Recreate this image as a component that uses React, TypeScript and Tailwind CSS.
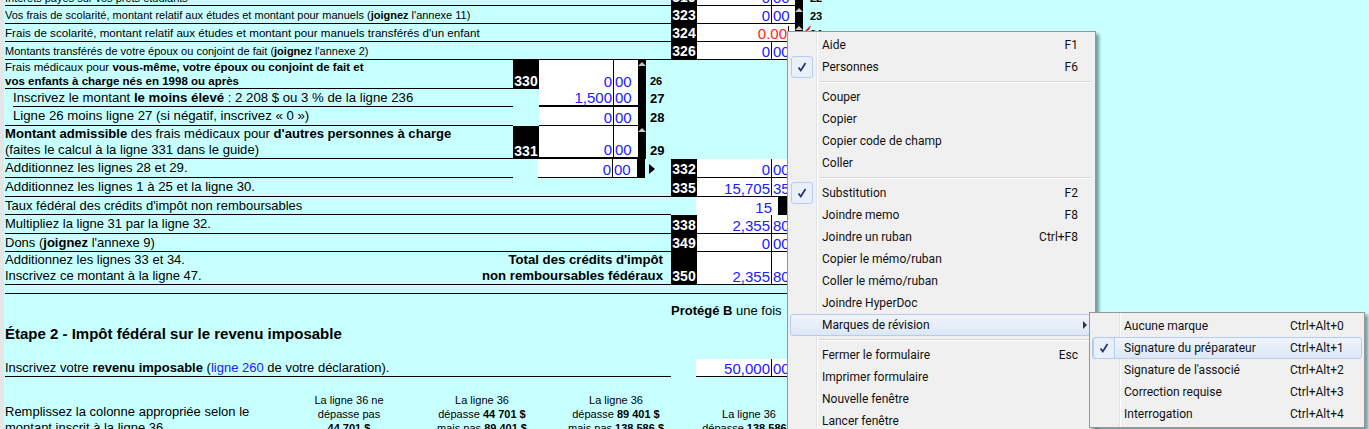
import type { ReactNode } from "react";

const num = "text-[#2020ff] text-[15px] leading-none";

function Code({ children }: { children?: ReactNode }) {
  return (
    <div className="flex w-[26px] shrink-0 items-end justify-center bg-black text-[14px] leading-[16px] font-bold text-white">
      {children}
    </div>
  );
}

function Amount({ amount, cents }: { amount: string; cents: string }) {
  return (
    <div className={`flex w-[98px] shrink-0 items-end bg-white ${num}`}>
      <div className="flex h-full w-[75px] items-end justify-end border-r border-black pr-[1px]">{amount}</div>
      <div className="pl-[1px]">{cents}</div>
    </div>
  );
}

function Bar({ tri = false }: { tri?: boolean }) {
  return (
    <div className="flex w-[8px] shrink-0 justify-center bg-black pt-[2px]">
      {tri && <div className="h-0 w-0 border-x-[4px] border-b-[4px] border-x-transparent border-b-[#c8c8c8]" />}
    </div>
  );
}

function Row({
  className,
  children,
  code,
  amount,
  cents,
  no,
  tri,
}: {
  className: string;
  children: ReactNode;
  code: string;
  amount: string;
  cents: string;
  no?: string;
  tri?: boolean;
}) {
  return (
    <div className={`flex ${className}`}>
      <div className="flex w-[790px] shrink-0 border-b border-black">
        <div className="flex-1 overflow-hidden">{children}</div>
        <Code>{code}</Code>
        <Amount amount={amount} cents={cents} />
      </div>
      <Bar tri={tri} />
      {no && <div className="ml-[7px] self-end text-[11px] leading-[16px] font-bold">{no}</div>}
    </div>
  );
}

function SubRow({
  className,
  label,
  code,
  amount,
  cents,
  no,
  tri,
  noCls = "text-[13px]",
  lineCls = "",
  fieldCls = "border-b border-black",
}: {
  className: string;
  label: ReactNode;
  code?: string;
  amount: string;
  cents: string;
  no: string;
  tri?: boolean;
  noCls?: string;
  lineCls?: string;
  fieldCls?: string;
}) {
  return (
    <div className={`flex ${className}`}>
      <div className={`w-[508px] shrink-0 ${lineCls}`}>
        <div className="h-full border-b border-black">{label}</div>
      </div>
      {code ? <Code>{code}</Code> : <div className="w-[26px] shrink-0" />}
      <div className={`flex w-[99px] shrink-0 items-end bg-white ${num} ${fieldCls}`}>
        <div className="flex h-full w-[75px] items-end justify-end border-r border-black pr-[1px]">{amount}</div>
        <div className="pl-[1px]">{cents}</div>
      </div>
      <Bar tri={tri} />
      <div className={`ml-[4px] self-end leading-[16px] font-bold ${noCls}`}>{no}</div>
    </div>
  );
}

function Check() {
  return (
    <div className="flex h-[22px] w-[22px] items-center justify-center rounded-[3px] border border-[#b4cdee] bg-[#e9effb]">
      <svg viewBox="0 0 10 10" className="h-[10px] w-[10px]">
        <path d="M1.5 5.5 L3.8 8.5 L8.5 1" fill="none" stroke="#20307a" strokeWidth="1.7" />
      </svg>
    </div>
  );
}

function Item({ label, keys, checked, hot, arrow }: { label: string; keys?: string; checked?: boolean; hot?: boolean; arrow?: boolean }) {
  return (
    <div className={`flex h-[22px] items-center rounded-[3px] border ${hot ? "border-[#b4cdee] bg-linear-to-b from-[#f0f4fb] to-[#dce7f6]" : "border-transparent"}`}>
      <div className="flex w-[31px] shrink-0 items-center">{checked && <Check />}</div>
      <div className="flex-1">{label}</div>
      {keys && <div className="pr-[14px]">{keys}</div>}
      {arrow && <div className="mr-[5px] h-0 w-0 border-y-[4px] border-l-[4px] border-y-transparent border-l-[#333]" />}
    </div>
  );
}

function Sep() {
  return <div className="my-[3px] ml-[30px] mr-[2px] h-[2px] border-t border-[#d7d7d7] bg-white" />;
}

function SubItem({ label, keys, hot, checked }: { label: string; keys: string; hot?: boolean; checked?: boolean }) {
  return (
    <div className={`flex h-[22px] items-center rounded-[3px] border ${hot ? "border-[#b4cdee] bg-linear-to-b from-[#f0f4fb] to-[#dce7f6]" : "border-transparent"}`}>
      <div className="flex w-[31px] shrink-0 items-center">{checked && <Check />}</div>
      <div className="w-[166px] shrink-0">{label}</div>
      <div>{keys}</div>
    </div>
  );
}

export default function App() {
  return (
    <div className="relative h-[429px] w-[1369px] overflow-hidden border-l-[4px] border-[#e6e6e6] bg-[#c8ffff] pl-[1px] font-['Liberation_Sans',sans-serif] text-black">
      {/* formulaire */}
      <Row className="h-[6px]" code="319" amount="0" cents="00" no="22">
        <div className="-mt-[9px] text-[11px] leading-[14px]">Intérêts payés sur vos prêts étudiants</div>
      </Row>
      <Row className="h-[18px]" code="323" amount="0" cents="00" no="23" tri>
        <div className="text-[11px] leading-[18px]">
          Vos frais de scolarité, montant relatif aux études et montant pour manuels (<b>joignez</b> l'annexe 11)
        </div>
      </Row>
      <div className="flex h-[18px]">
        <div className="flex w-[790px] shrink-0 border-b border-black">
          <div className="flex-1 text-[11.6px] leading-[18px]">Frais de scolarité, montant relatif aux études et montant pour manuels transférés d'un enfant</div>
          <Code>324</Code>
          <div className="relative flex w-[98px] shrink-0 items-end justify-end bg-white pr-[8px] text-[15px] leading-none text-[#ff2020]">
            0.00
            <div className="absolute right-[6px] bottom-[1px] h-[14px] w-[1px] bg-black" />
          </div>
        </div>
        <Bar tri />
        <div className="ml-[7px] self-end text-[11px] leading-[16px] font-bold">24</div>
      </div>
      <Row className="h-[18px]" code="326" amount="0" cents="00">
        <div className="text-[11px] leading-[18px]">
          Montants transférés de votre époux ou conjoint de fait (<b>joignez</b> l'annexe 2)
        </div>
      </Row>

      <SubRow
        className="h-[29px]"
        code="330"
        amount="0"
        cents="00"
        no="26"
        tri
        noCls="text-[11px]"
        fieldCls=""
        label={
          <div className="text-[11.5px] leading-[14px]">
            Frais médicaux pour <b>vous-même, votre époux ou conjoint de fait et</b>
            <br />
            <b>vos enfants à charge nés en 1998 ou après</b>
          </div>
        }
      />
      <SubRow
        className="h-[18px]"
        amount="1,500"
        cents="00"
        no="27"
        fieldCls="border-b-2 border-black"
        lineCls="pl-[8px]"
        label={
          <div className="text-[13.2px] leading-[18px]">
            Inscrivez le montant <b>le moins élevé</b> : 2 208 $ ou 3 % de la ligne 236
          </div>
        }
      />
      <SubRow
        className="h-[19px]"
        amount="0"
        cents="00"
        no="28"
        label={
          <div className="pl-[8px] text-[13.2px] leading-[18px]">Ligne 26 moins ligne 27 (si négatif, inscrivez « 0 »)</div>
        }
      />
      <SubRow
        className="h-[33px]"
        code="331"
        amount="0"
        cents="00"
        no="29"
        tri
        fieldCls="border-b-2 border-black"
        label={
          <div className="text-[13.1px] leading-[16px]">
            <b>Montant admissible</b> des frais médicaux pour <b>d'autres personnes à charge</b>
            <br />
            (faites le calcul à la ligne 331 dans le guide)
          </div>
        }
      />
      <div className="flex h-[19px]">
        <div className="w-[508px] shrink-0 border-b border-black text-[13.2px] leading-[18px]">Additionnez les lignes 28 et 29.</div>
        <div className="w-[25px] shrink-0" />
        <div className={`flex w-[99px] shrink-0 items-end border-b border-black bg-white ${num}`}>
          <div className="flex h-full w-[75px] items-end justify-end border-r border-black pr-[1px]">0</div>
          <div className="pl-[1px]">00</div>
        </div>
        <Bar />
        <div className="ml-[4px] h-0 w-0 self-center border-y-[5px] border-l-[6px] border-y-transparent border-l-black" />
        <div className="w-[16px] shrink-0" />
        <div className="flex w-[124px] shrink-0 border-b border-black">
          <Code>332</Code>
          <Amount amount="0" cents="00" />
        </div>
      </div>
      <Row className="h-[19px]" code="335" amount="15,705" cents="35">
        <div className="text-[13.2px] leading-[18px]">Additionnez les lignes 1 à 25 et la ligne 30.</div>
      </Row>
      <div className="flex h-[18px]">
        <div className="w-[666px] shrink-0 border-b border-black text-[13px] leading-[17px]">Taux fédéral des crédits d'impôt non remboursables</div>
        <div className="w-[25px] shrink-0" />
        <div className={`flex w-[82px] shrink-0 items-end justify-end bg-white pr-[6px] ${num}`}>15</div>
        <div className="w-[18px] shrink-0 bg-black" />
      </div>
      <Row className="h-[19px]" code="338" amount="2,355" cents="80">
        <div className="text-[13px] leading-[18px]">Multipliez la ligne 31 par la ligne 32.</div>
      </Row>
      <Row className="h-[18px]" code="349" amount="0" cents="00">
        <div className="text-[13px] leading-[17px]">
          Dons (<b>joignez</b> l'annexe 9)
        </div>
      </Row>
      <Row className="h-[33px]" code="350" amount="2,355" cents="80">
        <div className="flex text-[13px] leading-[16px]">
          <div>
            Additionnez les lignes 33 et 34.
            <br />
            Inscrivez ce montant à la ligne 47.
          </div>
          <div className="ml-auto pr-[8px] text-right text-[13.2px] font-bold">
            Total des crédits d'impôt
            <br />
            non remboursables fédéraux
          </div>
        </div>
      </Row>
      <div className="mt-[8px] w-[790px] border-b border-black" />

      <div className="mt-[9px] flex w-[790px] justify-end text-[13px] leading-[16px] whitespace-nowrap">
        <div className="w-[124px] shrink-0">
          <b>Protégé B</b> une fois
        </div>
      </div>
      <div className="mt-[6px] text-[15px] leading-[18px] font-bold">Étape 2 - Impôt fédéral sur le revenu imposable</div>

      <div className="mt-[16px] flex h-[18px] w-[790px]">
        <div className="w-[666px] shrink-0 border-b border-black text-[13px] leading-[18px]">
          Inscrivez votre <b>revenu imposable</b> (<span className="text-[#2020ff]">ligne 260</span> de votre déclaration).
        </div>
        <div className="w-[25px] shrink-0" />
        <div className={`flex w-[99px] shrink-0 items-end border-b border-black bg-white ${num}`}>
          <div className="flex h-full w-[76px] items-end justify-end border-r border-black pr-[1px]">50,000</div>
          <div className="pl-[1px]">00</div>
        </div>
      </div>

      <div className="mt-[16px] flex text-[11px] leading-[14px]">
        <div className="mt-[11px] w-[284px] shrink-0 text-[13px] leading-[16px]">
          Remplissez la colonne appropriée selon le
          <br />
          montant inscrit à la ligne 36.
        </div>
        <div className="w-[120px] shrink-0 text-center">
          La ligne 36 ne
          <br />
          dépasse pas
          <br />
          <b>44 701 $</b>
        </div>
        <div className="ml-[13px] w-[120px] shrink-0 text-center">
          La ligne 36
          <br />
          dépasse <b>44 701 $</b>
          <br />
          mais pas <b>89 401 $</b>
        </div>
        <div className="ml-[14px] w-[120px] shrink-0 text-center">
          La ligne 36
          <br />
          dépasse <b>89 401 $</b>
          <br />
          mais pas <b>138 586 $</b>
        </div>
        <div className="ml-[13px] mt-[14px] w-[120px] shrink-0 text-center">
          La ligne 36
          <br />
          dépasse <b>138 586 $</b>
        </div>
      </div>

      {/* marqueur rouge */}
      <svg viewBox="0 0 8 8" className="absolute top-[25px] left-[801px] h-[7px] w-[7px]">
        <path d="M7 0 L3 4 L1 6 L0 8 L5 5 Z" fill="#f00000" />
      </svg>

      {/* menu contextuel */}
      <div className="absolute top-[31px] left-[783px] h-[420px] w-[309px] border border-[#979797] bg-[#f0f0f0] p-[2px] pt-[2px] font-['Roboto',sans-serif] text-[12px] text-[#111] shadow-[3px_3px_3px_rgba(60,90,90,0.6)]">
        <div className="absolute top-0 bottom-0 left-[28px] w-[2px] border-l border-[#e2e3e3] bg-white" />
        <div className="relative">
          <Item label="Aide" keys="F1" />
          <Item label="Personnes" keys="F6" checked />
          <Sep />
          <Item label="Couper" />
          <Item label="Copier" />
          <Item label="Copier code de champ" />
          <Item label="Coller" />
          <Sep />
          <Item label="Substitution" keys="F2" checked />
          <Item label="Joindre memo" keys="F8" />
          <Item label="Joindre un ruban" keys="Ctrl+F8" />
          <Item label="Copier le mémo/ruban" />
          <Item label="Coller le mémo/ruban" />
          <Item label="Joindre HyperDoc" />
          <Item label="Marques de révision" hot arrow />
          <Sep />
          <Item label="Fermer le formulaire" keys="Esc" />
          <Item label="Imprimer formulaire" />
          <Item label="Nouvelle fenêtre" />
          <Item label="Lancer fenêtre" />
        </div>
      </div>

      {/* sous-menu */}
      <div className="absolute top-[312px] left-[1085px] w-[276px] border border-[#979797] bg-[#f0f0f0] p-[2px] font-['Roboto',sans-serif] text-[12px] text-[#111] shadow-[3px_3px_3px_rgba(60,90,90,0.6)]">
        <div className="absolute top-0 bottom-0 left-[29px] w-[2px] border-l border-[#e2e3e3] bg-white" />
        <div className="relative">
          <SubItem label="Aucune marque" keys="Ctrl+Alt+0" />
          <SubItem label="Signature du préparateur" keys="Ctrl+Alt+1" hot checked />
          <SubItem label="Signature de l'associé" keys="Ctrl+Alt+2" />
          <SubItem label="Correction requise" keys="Ctrl+Alt+3" />
          <SubItem label="Interrogation" keys="Ctrl+Alt+4" />
        </div>
      </div>
    </div>
  );
}
